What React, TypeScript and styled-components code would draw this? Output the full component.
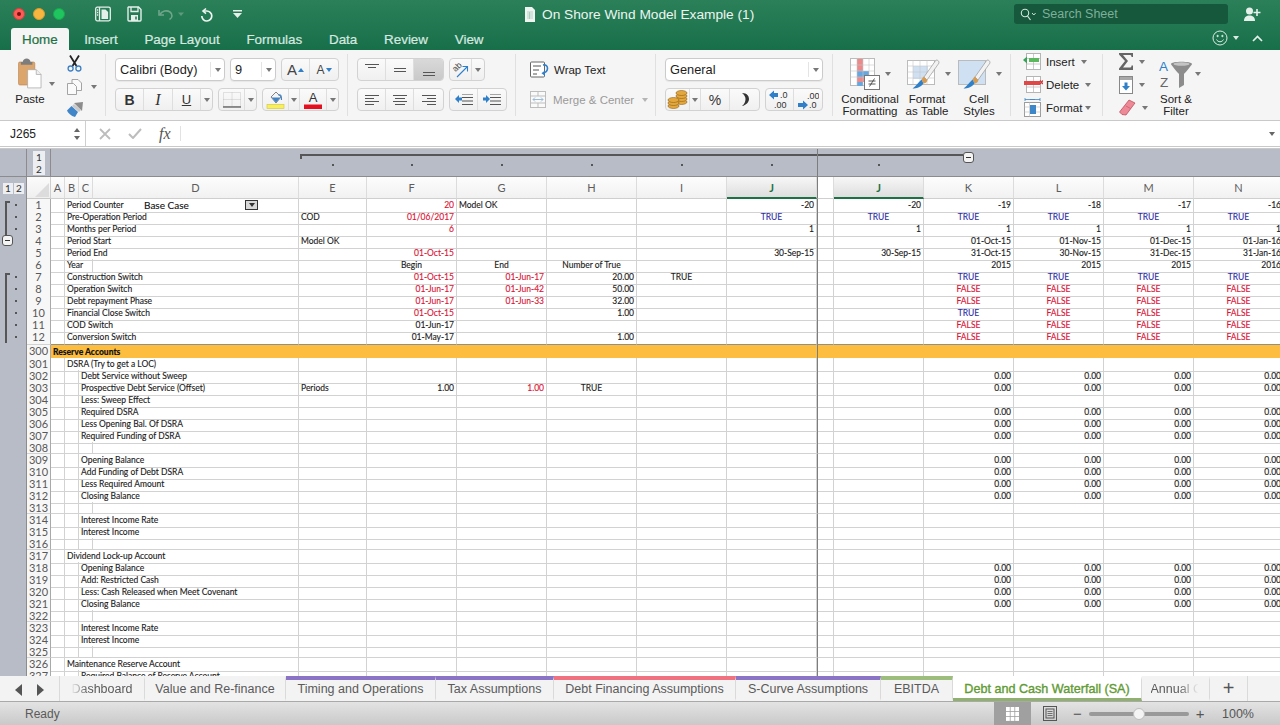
import React from "react";
import styled, { createGlobalStyle } from "styled-components";

const UI = `"Liberation Sans", Arial, sans-serif`;
const SHEET = `Lato, "Open Sans", sans-serif`;
const COLS =
  "14px 14px 14px 206px 68px 90px 90px 90px 90px 90px 17px 90px 90px 90px 90px 90px";
const SHEET_GRID = `27px 24px ${COLS}`;
const SHEET_WIDTH = 1284;
const GRID_LINE = "#d2d2d2";
const RULE = "#8f8f8f";
const BAND = "#b8bcc6";

const COLUMNS = ["A", "B", "C", "D", "E", "F", "G", "H", "I", "J", "X", "Y", "K", "L", "M", "N"] as const;
type Col = (typeof COLUMNS)[number];
type Val = { t: string; c?: "red" | "blue"; a?: "left" | "center" | "right" };
type RowData = {
  n: number;
  b?: string;
  c?: string;
  v?: Partial<Record<Col, Val>>;
  dot?: boolean;
  bracket?: "start" | "mid" | "end";
  minus?: boolean;
  shortLabel?: boolean;
  combo?: boolean;
  rule?: boolean;
};

const N = (t: string): Val => ({ t });
const R = (t: string): Val => ({ t, c: "red" });
const L = (t: string): Val => ({ t, a: "left" });
const C = (t: string): Val => ({ t, a: "center" });
const TRUE: Val = { t: "TRUE", c: "blue", a: "center" };
const FALSE: Val = { t: "FALSE", c: "red", a: "center" };
const zeros = { K: N("0.00"), L: N("0.00"), M: N("0.00"), N: N("0.00") };
const allFalse = { K: FALSE, L: FALSE, M: FALSE, N: FALSE };
const allTrue = { K: TRUE, L: TRUE, M: TRUE, N: TRUE };

const TOP_ROWS: RowData[] = [
  { n: 1, b: "Period Counter", dot: true, bracket: "start", combo: true, v: { F: R("20"), G: L("Model OK"), J: N("-20"), Y: N("-20"), K: N("-19"), L: N("-18"), M: N("-17"), N: N("-16") } },
  { n: 2, b: "Pre-Operation Period", dot: true, bracket: "mid", v: { E: L("COD"), F: R("01/06/2017"), J: TRUE, Y: TRUE, ...allTrue } },
  { n: 3, b: "Months per Period", dot: true, bracket: "end", v: { F: R("6"), J: N("1"), Y: N("1"), K: N("1"), L: N("1"), M: N("1"), N: N("1") } },
  { n: 4, b: "Period Start", minus: true, v: { E: L("Model OK"), K: N("01-Oct-15"), L: N("01-Nov-15"), M: N("01-Dec-15"), N: N("01-Jan-16") } },
  { n: 5, b: "Period End", v: { F: R("01-Oct-15"), J: N("30-Sep-15"), Y: N("30-Sep-15"), K: N("31-Oct-15"), L: N("30-Nov-15"), M: N("31-Dec-15"), N: N("31-Jan-16") } },
  { n: 6, b: "Year", shortLabel: true, v: { F: C("Begin"), G: C("End"), H: C("Number of True"), K: N("2015"), L: N("2015"), M: N("2015"), N: N("2016") } },
  { n: 7, b: "Construction Switch", dot: true, bracket: "start", v: { F: R("01-Oct-15"), G: R("01-Jun-17"), H: N("20.00"), I: C("TRUE"), ...allTrue } },
  { n: 8, b: "Operation Switch", dot: true, bracket: "mid", v: { F: R("01-Jun-17"), G: R("01-Jun-42"), H: N("50.00"), ...allFalse } },
  { n: 9, b: "Debt repayment Phase", dot: true, bracket: "mid", v: { F: R("01-Jun-17"), G: R("01-Jun-33"), H: N("32.00"), ...allFalse } },
  { n: 10, b: "Financial Close Switch", dot: true, bracket: "mid", v: { F: R("01-Oct-15"), H: N("1.00"), ...allFalse, K: TRUE } },
  { n: 11, b: "COD Switch", dot: true, bracket: "mid", v: { F: N("01-Jun-17"), ...allFalse } },
  { n: 12, b: "Conversion Switch", dot: true, bracket: "end", rule: true, v: { F: N("01-May-17"), H: N("1.00"), ...allFalse } },
];

const BODY_ROWS: RowData[] = [
  { n: 301, b: "DSRA (Try to get a LOC)" },
  { n: 302, c: "Debt Service without Sweep", v: zeros },
  { n: 303, c: "Prospective Debt Service (Offset)", v: { E: L("Periods"), F: N("1.00"), G: R("1.00"), H: C("TRUE"), ...zeros } },
  { n: 304, c: "Less: Sweep Effect" },
  { n: 305, c: "Required DSRA", v: zeros },
  { n: 306, c: "Less Opening Bal. Of DSRA", v: zeros },
  { n: 307, c: "Required Funding of DSRA", v: zeros },
  { n: 308 },
  { n: 309, c: "Opening Balance", v: zeros },
  { n: 310, c: "Add Funding of Debt DSRA", v: zeros },
  { n: 311, c: "Less Required Amount", v: zeros },
  { n: 312, c: "Closing Balance", v: zeros },
  { n: 313 },
  { n: 314, c: "Interest Income Rate" },
  { n: 315, c: "Interest Income" },
  { n: 316 },
  { n: 317, b: "Dividend Lock-up Account" },
  { n: 318, c: "Opening Balance", v: zeros },
  { n: 319, c: "Add: Restricted Cash", v: zeros },
  { n: 320, c: "Less: Cash Released when Meet Covenant", v: zeros },
  { n: 321, c: "Closing Balance", v: zeros },
  { n: 322 },
  { n: 323, c: "Interest Income Rate" },
  { n: 324, c: "Interest Income" },
  { n: 325 },
  { n: 326, b: "Maintenance Reserve Account" },
  { n: 327, c: "Required Balance of Reserve Account" },
];

const HEADER_LETTERS: { key: string; label: string; selected?: boolean }[] = [
  { key: "A", label: "A" }, { key: "B", label: "B" }, { key: "C", label: "C" }, { key: "D", label: "D" },
  { key: "E", label: "E" }, { key: "F", label: "F" }, { key: "G", label: "G" }, { key: "H", label: "H" },
  { key: "I", label: "I" }, { key: "J", label: "J", selected: true }, { key: "X", label: "" },
  { key: "Y", label: "J", selected: true }, { key: "K", label: "K" }, { key: "L", label: "L" },
  { key: "M", label: "M" }, { key: "N", label: "N" },
];

const SHEET_TABS: { name: string; width: number; bar?: string; active?: boolean; fade?: "left" | "right" }[] = [
  { name: "Dashboard", width: 85, fade: "left" },
  { name: "Value and Re-finance", width: 141 },
  { name: "Timing and Operations", width: 150, bar: "#8b73c6" },
  { name: "Tax Assumptions", width: 118, bar: "#8b73c6" },
  { name: "Debt Financing Assumptions", width: 182, bar: "#f0717f" },
  { name: "S-Curve Assumptions", width: 145, bar: "#8b73c6" },
  { name: "EBITDA", width: 72, bar: "#9dbd7c" },
  { name: "Debt and Cash Waterfall (SA)", width: 189, active: true },
  { name: "Annual Cash", width: 68, fade: "right" },
];

const GlobalStyle = createGlobalStyle`
  html, body { margin: 0; padding: 0; background: #fff; }
  #root { width: 100%; }
  * { box-sizing: border-box; }
`;

const Page = styled.div`
  width: 1280px;
  height: 725px;
  display: flex;
  flex-direction: column;
  overflow: hidden;
  font-family: ${UI};
  color: #222;
`;

/* title bar + tabs */
const Header = styled.header`
  height: 50px;
  flex: none;
  display: flex;
  flex-direction: column;
  background: linear-gradient(#2b8059, #176f49);
`;

const TitleRow = styled.div`
  height: 28px;
  display: flex;
  align-items: center;
  padding-left: 13px;
`;

const Lights = styled.div`
  display: flex;
  gap: 8px;
  width: 82px;
`;

const Light = styled.span<{ $color: string; $edge: string }>`
  width: 12px;
  height: 12px;
  border-radius: 50%;
  background: ${(p) => p.$color};
  border: 1px solid ${(p) => p.$edge};
  display: flex;
  align-items: center;
  justify-content: center;
`;

const LightDot = styled.span`
  width: 4px;
  height: 4px;
  border-radius: 50%;
  background: #7a0f10;
`;

const QuickTools = styled.div`
  width: 430px;
  display: flex;
  align-items: center;
`;

const QuickSlot = styled.span<{ $w: number }>`
  width: ${(p) => p.$w}px;
  display: flex;
  align-items: center;
`;

const DocTitle = styled.div`
  width: 489px;
  display: flex;
  align-items: center;
  gap: 7px;
  color: #eef5f1;
  font-size: 13.7px;
`;

const SearchBox = styled.div`
  width: 214px;
  height: 20px;
  border-radius: 3px;
  background: #15583c;
  display: flex;
  align-items: center;
  gap: 5px;
  padding-left: 6px;
  color: #7faf99;
  font-size: 12.5px;
`;

const TitleEnd = styled.div`
  margin-left: 16px;
  display: flex;
`;

const TabRow = styled.nav`
  height: 22px;
  display: flex;
  align-items: flex-end;
  padding-left: 11px;
`;

const MenuTab = styled.div<{ $active?: boolean }>`
  height: 22px;
  padding: 0 ${(p) => (p.$active ? 11 : 13.4)}px;
  margin-right: ${(p) => (p.$active ? 2 : 0)}px;
  display: flex;
  align-items: center;
  font-size: 13.4px;
  -webkit-text-stroke: 0.2px currentColor;
  color: ${(p) => (p.$active ? "#1e7145" : "#d8e9e0")};
  background: ${(p) => (p.$active ? "#f5f5f5" : "transparent")};
  border-radius: 3px 3px 0 0;
`;

const TabRowEnd = styled.div`
  margin-left: auto;
  padding: 0 17px 4px 0;
  display: flex;
  align-items: center;
  gap: 5px;
`;

/* ribbon */
const Ribbon = styled.section`
  height: 71px;
  flex: none;
  display: flex;
  background: #f5f5f5;
  border-bottom: 1px solid #c9c9c9;
`;

const Group = styled.div<{ $w: number; $pl: number; $pt?: number }>`
  width: ${(p) => p.$w}px;
  height: 70px;
  padding: ${(p) => p.$pt ?? 8}px 0 0 ${(p) => p.$pl}px;
  display: flex;
  position: relative;
  &::after {
    content: "";
    position: absolute;
    right: 0;
    top: 4px;
    bottom: 4px;
    width: 1px;
    background: #e0e0e0;
  }
`;

const LastGroup = styled(Group)`
  &::after {
    display: none;
  }
`;

const Stack = styled.div<{ $gap?: number }>`
  display: flex;
  flex-direction: column;
  gap: ${(p) => p.$gap ?? 7}px;
`;

const Line = styled.div`
  display: flex;
  align-items: center;
  gap: 5px;
  height: 23px;
`;

const Caret = styled.span<{ $color?: string; $up?: boolean; $ml?: number }>`
  display: inline-block;
  flex: none;
  width: 0;
  height: 0;
  margin-left: ${(p) => p.$ml ?? 0}px;
  border-left: 3px solid transparent;
  border-right: 3px solid transparent;
  ${(p) =>
    p.$up
      ? `border-bottom: 4px solid ${p.$color ?? "#777"};`
      : `border-top: 4px solid ${p.$color ?? "#777"};`}
`;

const Select = styled.div<{ $w: number }>`
  width: ${(p) => p.$w}px;
  height: 23px;
  background: #fff;
  border: 1px solid #cbcbcb;
  border-radius: 4px;
  box-shadow: 0 1px 1px rgba(0, 0, 0, 0.06);
  display: flex;
  align-items: center;
  padding-left: 4px;
  font-size: 12.8px;
  color: #1d1d1d;
`;

const SelectArrow = styled.span`
  margin-left: auto;
  width: 14px;
  height: 15px;
  border-left: 1px solid #e4e4e4;
  display: flex;
  align-items: center;
  justify-content: center;
`;

const Seg = styled.div`
  height: 23px;
  display: flex;
  border: 1px solid #d2d2d2;
  border-radius: 4px;
  background: linear-gradient(#fafafa, #f0f0f0);
  overflow: hidden;
`;

const SegBtn = styled.div<{ $w: number; $active?: boolean }>`
  width: ${(p) => p.$w}px;
  display: flex;
  align-items: center;
  justify-content: center;
  gap: 1px;
  border-right: 1px solid #dedede;
  background: ${(p) => (p.$active ? "linear-gradient(#d9d9d9, #c9c9c9)" : "transparent")};
  font-size: 14px;
  color: #333;
  &:last-child {
    border-right: none;
  }
`;

const BigA = styled.span<{ $size: number }>`
  font-size: ${(p) => p.$size}px;
  color: #444;
  line-height: 1;
`;

const Bold = styled.span`
  font-weight: 700;
  font-size: 14px;
  color: #333;
`;

const Italic = styled.span`
  font-style: italic;
  font-family: "Liberation Serif", serif;
  font-size: 16px;
  color: #333;
`;

const Under = styled.span`
  font-size: 13px;
  text-decoration: underline;
  color: #333;
`;

const PlainLink = styled.div<{ $muted?: boolean }>`
  height: 23px;
  display: flex;
  align-items: center;
  font-size: 11.5px;
  color: ${(p) => (p.$muted ? "#9a9a9a" : "#222")};
`;

const LinkLabel = styled.span<{ $left: number }>`
  margin-left: ${(p) => p.$left}px;
`;

const PasteBtn = styled.div`
  width: 32px;
  display: flex;
  flex-direction: column;
  align-items: center;
  font-size: 11.5px;
  gap: 3px;
`;

const PasteTop = styled.div`
  height: 32px;
  display: flex;
  align-items: flex-start;
`;

const PasteCaret = styled.div`
  width: 21px;
  padding: 14px 0 0 3px;
`;

const ClipTools = styled.div`
  display: flex;
  flex-direction: column;
  gap: 6px;
  margin-top: -3px;
`;

const ClipLine = styled.div`
  height: 17px;
  display: flex;
  align-items: center;
  gap: 6px;
`;

const StyleBtn = styled.div<{ $w: number }>`
  width: ${(p) => p.$w}px;
  display: flex;
  flex-direction: column;
  align-items: center;
  font-size: 11.5px;
  line-height: 12px;
  text-align: center;
  color: #222;
`;

const SortBtn = styled(StyleBtn)`
  margin-top: 7px;
`;

const SortCaret = styled(Caret)`
  margin: 0 -8px 0 -3px;
`;

const StyleIcon = styled.div<{ $pl?: number }>`
  height: 36px;
  display: flex;
  align-items: center;
  gap: 5px;
  margin: -1px 0 1px;
  padding-left: ${(p) => p.$pl ?? 0}px;
`;

const EditLine = styled.div`
  height: 23px;
  display: flex;
  align-items: center;
  gap: 6px;
  width: 38px;
`;

const CellLine = styled.div`
  height: 23px;
  display: flex;
  align-items: center;
  gap: 3px;
  font-size: 11.5px;
  color: #222;
`;

/* formula bar */
const FormulaBar = styled.div`
  height: 26px;
  flex: none;
  display: flex;
  align-items: center;
  background: #fff;
  border-bottom: 1px solid #c9c9c9;
`;

const NameBox = styled.div`
  width: 86px;
  height: 100%;
  padding: 0 5px 0 10px;
  display: flex;
  align-items: center;
  justify-content: space-between;
  border-right: 1px solid #cfcfcf;
  font-size: 12px;
`;

const Steppers = styled.span`
  display: flex;
  flex-direction: column;
  gap: 4px;
`;

const FormulaTools = styled.div`
  width: 95px;
  height: 15px;
  padding-left: 13px;
  display: flex;
  align-items: center;
  gap: 17px;
  border-right: 1px solid #e2e2e2;
`;

const Fx = styled.span`
  font-family: "Liberation Serif", serif;
  font-style: italic;
  font-size: 16px;
  color: #555;
`;

const FormulaInput = styled.div`
  flex: 1;
  display: flex;
  justify-content: flex-end;
  padding-right: 5px;
`;

/* sheet */
const Sheet = styled.main`
  flex: 1;
  min-height: 0;
  overflow: hidden;
  margin-top: 1px;
  border-top: 1px solid #c9c9c9;
`;

const OutlineBand = styled.div`
  height: 28px;
  width: ${SHEET_WIDTH}px;
  display: grid;
  grid-template-columns: ${SHEET_GRID};
  grid-template-rows: 28px;
  background: ${BAND};
  border-bottom: 1px solid #8c8c8c;
`;

const BandGutter = styled.div`
  grid-column: 1;
  grid-row: 1;
  border-right: 1px solid #8c8c8c;
`;

const LevelStack = styled.div`
  grid-column: 2;
  grid-row: 1;
  border-right: 1px solid #8c8c8c;
  padding: 2px 0 0 6px;
  display: flex;
  flex-direction: column;
`;

const LevelKey = styled.span`
  width: 12px;
  height: 12px;
  background: #eceef1;
  color: #333;
  font: 10px/12px ${SHEET};
  text-align: center;
`;

const BracketBar = styled.div`
  grid-column: 7 / 16;
  grid-row: 1;
  margin: 5px 51px 0 1px;
  height: 5px;
  border-top: 2px solid #565656;
  border-left: 2px solid #565656;
`;

const BandDot = styled.span<{ $col: number }>`
  grid-column: ${(p) => p.$col};
  grid-row: 1;
  justify-self: center;
  margin-top: 15px;
  width: 2px;
  height: 2px;
  background: #555;
`;

const BandFreeze = styled.div`
  grid-column: 13;
  grid-row: 1;
  border-left: 1px solid #7d7d7d;
`;

const OutlineMinus = styled.span`
  width: 11px;
  height: 11px;
  border: 1px solid #555;
  border-radius: 3px;
  background: #f4f4f4;
  display: flex;
  align-items: center;
  justify-content: center;
  &::before {
    content: "";
    width: 5px;
    height: 1px;
    background: #333;
  }
`;

const BandMinus = styled(OutlineMinus)`
  grid-column: 15;
  grid-row: 1;
  justify-self: center;
  margin: 3px 2px 0 0;
`;

const HeaderRow = styled.div`
  height: 22px;
  width: ${SHEET_WIDTH}px;
  display: grid;
  grid-template-columns: ${SHEET_GRID};
`;

const HeaderGutter = styled.div`
  background: ${BAND};
  border-right: 1px solid #8c8c8c;
  padding: 6px 0 0 3px;
  display: flex;
  gap: 1px;
`;

const HeaderLevel = styled.span`
  width: 10px;
  height: 11px;
  background: #eceef1;
  color: #333;
  font: 10px/11px ${SHEET};
  text-align: center;
`;

const Corner = styled.div`
  background: linear-gradient(#fbfbfb, #efefef);
  border-right: 1px solid #cfcfcf;
  border-bottom: 1px solid #c8c8c8;
  display: flex;
  align-items: flex-end;
  justify-content: flex-end;
  padding: 0 1px 1px 0;
`;

const ColHead = styled.div<{ $selected?: boolean; $freeze?: boolean }>`
  display: flex;
  align-items: center;
  justify-content: center;
  font: ${(p) => (p.$selected ? 700 : 400)} 11px ${SHEET};
  color: ${(p) => (p.$selected ? "#1e7145" : "#5c5c5c")};
  background: ${(p) =>
    p.$freeze
      ? "#fff"
      : p.$selected
      ? "linear-gradient(#f7f7f7, #dedede)"
      : "linear-gradient(#fdfdfd, #f1f1f1)"};
  border-right: 1px solid #dcdcdc;
  border-left: ${(p) => (p.$freeze ? "1px solid #7d7d7d" : "none")};
  border-bottom: ${(p) => (p.$selected ? "2px solid #1e7145" : "1px solid #cfcfcf")};
`;

const SheetRow = styled.div<{ $h?: number; $fill?: string }>`
  height: ${(p) => p.$h ?? 12}px;
  width: ${SHEET_WIDTH}px;
  display: grid;
  grid-template-columns: ${SHEET_GRID};
  background: ${(p) => p.$fill ?? "#fff"};
  font: 8.5px/13px ${SHEET};
  -webkit-text-stroke: 0.12px currentColor;
  color: #1a1a1a;
`;

const Gutter = styled.div`
  background: ${BAND};
  border-right: 1px solid #8c8c8c;
  position: relative;
`;

const Bracket = styled.span<{ $kind: "start" | "mid" | "end" }>`
  position: absolute;
  left: 5px;
  width: 2px;
  top: ${(p) => (p.$kind === "start" ? 2 : 0)}px;
  bottom: ${(p) => (p.$kind === "end" ? 2 : 0)}px;
  background: #565656;
  &::after {
    content: "";
    display: ${(p) => (p.$kind === "start" ? "block" : "none")};
    width: 5px;
    height: 1.5px;
    background: #565656;
  }
`;

const GutterDot = styled.span`
  position: absolute;
  left: 15px;
  top: 5px;
  width: 2px;
  height: 2px;
  background: #555;
`;

const GutterMinus = styled(OutlineMinus)`
  position: absolute;
  left: 2px;
  top: 0;
`;

const RowHead = styled.div<{ $rule?: boolean }>`
  background: #f7f7f7;
  border-right: 1px solid #a9a9a9;
  border-bottom: 1px solid ${(p) => (p.$rule ? RULE : GRID_LINE)};
  font: 11px/11px ${SHEET};
  -webkit-text-stroke: 0;
  text-align: center;
  color: #585858;
`;

const Cell = styled.div<{ $align?: string; $tone?: string; $span?: number; $rule?: boolean; $freeze?: boolean }>`
  grid-column: span ${(p) => p.$span ?? 1};
  position: relative;
  white-space: nowrap;
  overflow: ${(p) => (p.$span ? "visible" : "hidden")};
  padding: 0 2px;
  text-align: ${(p) => p.$align ?? "right"};
  color: ${(p) => (p.$tone === "red" ? "#dc1233" : p.$tone === "blue" ? "#2c2ca8" : "#1a1a1a")};
  border-right: 1px solid ${GRID_LINE};
  border-bottom: 1px solid ${(p) => (p.$rule ? RULE : GRID_LINE)};
  border-left: ${(p) => (p.$freeze ? "1px solid #7d7d7d" : "none")};
`;

const ComboText = styled.span`
  position: absolute;
  left: 79px;
  top: 0;
  font-size: 10px;
  color: #111;
`;

const ComboButton = styled.span`
  position: absolute;
  left: 180px;
  top: 1px;
  width: 13px;
  height: 10px;
  background: #d8d8d8;
  border: 1px solid #333;
  display: flex;
  align-items: center;
  justify-content: center;
`;

const SpacerCell = styled.div<{ $freeze?: boolean }>`
  border-right: 1px solid ${GRID_LINE};
  border-left: ${(p) => (p.$freeze ? "1px solid #7d7d7d" : "none")};
`;

const BannerHead = styled(RowHead)`
  border-bottom: none;
`;

const BannerText = styled.div`
  grid-column: span 10;
  padding-left: 2px;
  font-weight: 900;
  color: #111;
  line-height: 14px;
`;

const BannerFreeze = styled.div`
  border-left: 1px solid #7d7d7d;
`;

/* tabs and status */
const TabStrip = styled.div`
  height: 26px;
  flex: none;
  display: flex;
  background: #f3f3f3;
  border-bottom: 1px solid #a9a9a9;
`;

const TabNav = styled.div`
  width: 60px;
  padding: 3px 0 0 15px;
  display: flex;
  align-items: center;
  gap: 15px;
  border-right: 1px solid #dadada;
`;

const SheetTab = styled.div<{ $w: number; $bar?: string; $active?: boolean }>`
  width: ${(p) => p.$w}px;
  flex: none;
  display: flex;
  align-items: center;
  justify-content: center;
  font-size: ${(p) => (p.$active ? 12.6 : 12.5)}px;
  -webkit-text-stroke: ${(p) => (p.$active ? "0.35px currentColor" : "0")};
  white-space: nowrap;
  overflow: hidden;
  color: ${(p) => (p.$active ? "#5f9a33" : "#5a5a5a")};
  background: ${(p) => (p.$active ? "#fff" : "transparent")};
  border-right: 1px solid #dadada;
  border-top: 4px solid ${(p) => p.$bar ?? "transparent"};
  border-bottom: 3px solid ${(p) => (p.$active ? "#8fb06f" : "transparent")};
`;

const FadedName = styled.span`
  mask-image: linear-gradient(to right, transparent 0, #000 28%);
`;

const ClippedName = styled.span`
  width: 50px;
  overflow: hidden;
  mask-image: linear-gradient(to right, #000 55%, transparent 95%);
`;

const AddSheet = styled.div`
  width: 38px;
  display: flex;
  align-items: center;
  justify-content: center;
  font-size: 20px;
  color: #555;
  border-right: 1px solid #dadada;
`;

const StatusBar = styled.footer`
  height: 23px;
  flex: none;
  display: flex;
  align-items: center;
  padding-left: 25px;
  background: linear-gradient(#e3e3e3, #c9c9c9);
  font-size: 12px;
  color: #5a5a5a;
`;

const StatusRight = styled.div`
  margin-left: auto;
  height: 100%;
  display: flex;
  align-items: center;
`;

const ViewBtn = styled.div<{ $active?: boolean }>`
  width: 37px;
  height: 100%;
  display: flex;
  align-items: center;
  justify-content: center;
  background: ${(p) => (p.$active ? "#a0a0a0" : "transparent")};
`;

const Zoomer = styled.div`
  width: 149px;
  margin-left: 5px;
  display: flex;
  align-items: center;
  gap: 7px;
  font-size: 15px;
  color: #555;
`;

const SliderTrack = styled.div`
  width: 100px;
  height: 4px;
  border-radius: 2px;
  background: #999;
  display: flex;
  align-items: center;
  justify-content: center;
`;

const SliderThumb = styled.span`
  width: 12px;
  height: 12px;
  border-radius: 50%;
  background: #f4f4f4;
  border: 1px solid #bcbcbc;
`;

const ZoomValue = styled.span`
  width: 58px;
  font-size: 12.5px;
  color: #555;
`;

/* icons */
const SidebarIcon = () => (
  <svg width="16" height="16" viewBox="0 0 16 16" fill="none" stroke="#e6f0eb" strokeWidth="1.3">
    <rect x="0.7" y="1.2" width="14.6" height="13.6" rx="1.5" />
    <path d="M4.5 1.2v13.6" />
    <path d="M2 4h1.2M2 6.5h1.2M2 9h1.2" />
    <path d="M6.5 13V3.5h4l2.6 2.6V13z" fill="#e6f0eb" stroke="none" />
  </svg>
);

const SaveIcon = () => (
  <svg width="15" height="16" viewBox="0 0 15 16" fill="none">
    <path d="M1.5 1h10L14 3.5V14a1 1 0 0 1-1 1H2a1 1 0 0 1-1-1V1.5z" stroke="#e6f0eb" strokeWidth="1.4" />
    <path d="M4 1v4.5h7V1" stroke="#e6f0eb" strokeWidth="1.3" />
    <rect x="4" y="9" width="7" height="6" fill="#e6f0eb" />
    <rect x="8.2" y="10.5" width="1.6" height="3" fill="#2a7d57" />
  </svg>
);

const UndoIcon = () => (
  <svg width="28" height="14" viewBox="0 0 28 14" fill="none">
    <path d="M2 3v5h5" stroke="#6fa58c" strokeWidth="1.6" />
    <path d="M2.5 8C5 3.5 10 3 13 5c3 2.2 2.5 6-.5 7.5" stroke="#6fa58c" strokeWidth="1.6" />
    <path d="M21 5.5h6l-3 3.5z" fill="#5f9a80" />
  </svg>
);

const RedoIcon = () => (
  <svg width="13" height="15" viewBox="0 0 13 15" fill="none">
    <path d="M6 1.5l-3 2.6L6 6.6" stroke="#eef5f1" strokeWidth="1.6" />
    <path d="M3.5 4h3A5 5 0 1 1 1.8 9" stroke="#eef5f1" strokeWidth="1.7" />
  </svg>
);

const CustomizeIcon = () => (
  <svg width="9" height="8" viewBox="0 0 9 8">
    <rect x="0" y="0" width="9" height="1.5" fill="#e6f0eb" />
    <path d="M0 3h9L4.5 8z" fill="#e6f0eb" />
  </svg>
);

const DocIcon = () => (
  <svg width="10" height="15" viewBox="0 0 10 15">
    <path d="M0 0h7l3 3v12H0z" fill="#eef5f1" />
    <path d="M2 5h6M2 7h6M2 9h6M2 11h6M4.5 5v7" stroke="#9cc3b0" strokeWidth="0.7" />
  </svg>
);

const SearchIcon = () => (
  <svg width="17" height="13" viewBox="0 0 17 13" fill="none">
    <circle cx="5" cy="5" r="3.7" stroke="#d5e5dd" strokeWidth="1.1" />
    <path d="M7.5 8l3 4" stroke="#d5e5dd" strokeWidth="1.2" />
    <path d="M12 5l1.8 2 1.8-2" stroke="#d5e5dd" strokeWidth="1" />
  </svg>
);

const PersonIcon = () => (
  <svg width="17" height="14" viewBox="0 0 17 14">
    <circle cx="5.5" cy="4" r="3.5" fill="#e6f0eb" />
    <path d="M0 14c0-4 2.5-5.500 5.500-5.500S11 10 11 14z" fill="#e6f0eb" />
    <path d="M13 2v7M9.500 5.500h7" stroke="#e6f0eb" strokeWidth="1.6" />
  </svg>
);

const SmileyIcon = () => (
  <svg width="16" height="16" viewBox="0 0 16 16" fill="none" stroke="#dcebe3" strokeWidth="1">
    <circle cx="8" cy="8" r="7" />
    <circle cx="5.6" cy="6" r="0.7" fill="#dcebe3" />
    <circle cx="10.4" cy="6" r="0.7" fill="#dcebe3" />
    <path d="M4.500 9.500c1.500 3 5.500 3 7 0" />
  </svg>
);

const ChevronUpIcon = () => (
  <svg width="11" height="7" viewBox="0 0 11 7" fill="none">
    <path d="M1 6l4.500-4.500L10 6" stroke="#e6f0eb" strokeWidth="1.7" />
  </svg>
);

const PasteIcon = () => (
  <svg width="24" height="31" viewBox="0 0 25 32">
    <rect x="0.5" y="4" width="17" height="24" rx="1.5" fill="#dca56c" stroke="#b57e47" strokeWidth="0.6" />
    <path d="M5 4c0-2 2-3.500 4-3.500S13 2 13 4h2v3H3V4z" fill="#7d7d7d" />
    <path d="M10 12h9l5 5v14H10z" fill="#fff" stroke="#a9a9a9" strokeWidth="0.8" />
    <path d="M19 12v5h5" fill="#f0f0f0" stroke="#a9a9a9" strokeWidth="0.8" />
  </svg>
);

const CutIcon = () => (
  <svg width="15" height="17" viewBox="0 0 15 17" fill="none">
    <path d="M3 0.5l6.500 10.500M12 0.5L5.500 11" stroke="#222" strokeWidth="1.8" />
    <circle cx="3.6" cy="13.5" r="2.5" stroke="#3b7fc4" strokeWidth="1.3" />
    <circle cx="11.4" cy="13.5" r="2.5" stroke="#3b7fc4" strokeWidth="1.3" />
  </svg>
);

const CopyIcon = () => (
  <svg width="15" height="16" viewBox="0 0 15 16" fill="#fafafa" stroke="#9a9a9a" strokeWidth="0.9">
    <path d="M5 .5h6l3.500 3.500v7.500H5z" />
    <path d="M.5 4.500h6l3 3v8h-9z" />
  </svg>
);

const BrushIcon = () => (
  <svg width="17" height="15" viewBox="0 0 17 15">
    <path d="M7 1l9-1-1 9z" fill="#8c8c8c" />
    <path d="M7 2l7 6-2 2-7-6z" fill="#c9c9c9" />
    <path d="M4.500 4L11 10l-3 5C4 14 1 11 0 8.500z" fill="#3f85c8" />
  </svg>
);

const BordersIcon = () => (
  <svg width="18" height="16" viewBox="0 0 18 16" fill="none">
    <path d="M.5.5h17v14H.5zM9 .5v14M.5 7.500h17" stroke="#b5b5b5" strokeWidth="0.7" strokeDasharray="1 1" />
    <path d="M0 15h18" stroke="#333" strokeWidth="1.2" />
  </svg>
);

const FillIcon = () => (
  <svg width="19" height="18" viewBox="0 0 19 18">
    <path d="M5 6l5-5 5 5-5 6z" fill="#f6f6f6" stroke="#666" strokeWidth="0.8" />
    <path d="M5.500 6.500h9L10 11.500z" fill="#4384c6" />
    <path d="M12 4c3-1 3.500 1 3.500 5" fill="none" stroke="#4384c6" strokeWidth="1.2" />
    <rect x="1" y="13.5" width="17" height="4" fill="#f8ef5a" stroke="#cfc53a" strokeWidth="0.6" />
  </svg>
);

const FontColorIcon = () => (
  <svg width="18" height="18" viewBox="0 0 18 18">
    <text x="9" y="11" textAnchor="middle" fontFamily="Liberation Sans" fontSize="13" fill="#333">A</text>
    <rect x="0" y="13.5" width="18" height="4.5" fill="#e60f1f" />
  </svg>
);

const LinesIcon = ({ rows }: { rows: [number, number, number][] }) => (
  <svg width="16" height="12" viewBox="0 0 16 12" stroke="#555" strokeWidth="1">
    {rows.map(([x1, x2, y]) => (
      <path key={y} d={`M${x1} ${y + 0.5}H${x2}`} />
    ))}
  </svg>
);

const IndentIcon = ({ flip }: { flip?: boolean }) => (
  <svg width="18" height="11" viewBox="0 0 18 11">
    <path d="M7 0h11M7 3.500h11M7 7h11M7 10.500h11" stroke="#555" strokeWidth="1" />
    <path d={flip ? "M0 3.500h3V1l4 4-4 4V6.500H0z" : "M7 3.500H4V1L0 5l4 4V6.500h3z"} fill="#2f7fc9" />
  </svg>
);

const OrientIcon = () => (
  <svg width="17" height="17" viewBox="0 0 17 17" fill="none" overflow="visible">
    <text x="1" y="9" fontFamily="Liberation Sans" fontSize="8.5" fill="#444" transform="rotate(-45 5 7)">ab</text>
    <path d="M5 16L15 6M10.500 5.500h5v5" stroke="#2f7fc9" strokeWidth="1.1" />
  </svg>
);

const WrapIcon = () => (
  <svg width="20" height="17" viewBox="0 0 20 17" fill="none">
    <rect x="0.5" y="1" width="14" height="15" rx="1" fill="#fff" stroke="#666" />
    <path d="M3 5h8M3 9h6M3 13h4" stroke="#555" />
    <path d="M13 4c6-1 6 7 0 8" stroke="#2f7fc9" strokeWidth="1.6" />
    <path d="M15 9.500l-3.500 2.700 3.500 2.800z" fill="#2f7fc9" />
  </svg>
);

const MergeIcon = () => (
  <svg width="16" height="17" viewBox="0 0 16 17" fill="none" stroke="#bdbdbd">
    <rect x="0.5" y="0.5" width="15" height="16" fill="#fafafa" />
    <path d="M.5 5h15M.5 12h15M8 .5V5M8 12v4.500" />
    <path d="M3 8.500h10M5 6.500l-2 2 2 2M11 6.500l2 2-2 2" stroke="#9dbcd8" />
  </svg>
);

const CoinsIcon = () => (
  <svg width="21" height="19" viewBox="0 0 21 19" stroke="#8f5f17" strokeWidth="0.6">
    <g fill="#e3a73e">
      <ellipse cx="14.5" cy="12" rx="5.5" ry="2.5" />
      <ellipse cx="14.5" cy="9" rx="5.5" ry="2.5" />
      <ellipse cx="14.5" cy="6" rx="5.5" ry="2.5" />
      <ellipse cx="14.5" cy="3" rx="5.5" ry="2.5" />
      <ellipse cx="6.5" cy="16" rx="5.5" ry="2.5" />
      <ellipse cx="6.5" cy="13" rx="5.5" ry="2.5" />
      <ellipse cx="6.5" cy="10" rx="5.5" ry="2.5" />
    </g>
  </svg>
);

const CommaIcon = () => (
  <svg width="8" height="13" viewBox="0 0 8 13">
    <path d="M1 0c5 0 7 3 7 6s-3 6.500-7 7c2.500-2 3.500-4.500 3.500-7S3 1.500 1 0z" fill="#333" />
  </svg>
);

const DecimalIcon = ({ more }: { more?: boolean }) => (
  <svg width="22" height="20" viewBox="0 0 22 20">
    <path d={more ? "M0 5l5-4.500V3h4v4H5v2.500z" : "M11 15l-5-4.500V13H1v4h5v2.500z"} fill="#2f7fc9" />
    <text x={more ? 11 : 10} y={more ? 8 : 9} fontFamily="Liberation Sans" fontSize="9" fill="#333">{more ? ".0" : ".00"}</text>
    <text x={more ? 5 : 12} y={18} fontFamily="Liberation Sans" fontSize="9" fill="#333">{more ? ".00" : ".0"}</text>
  </svg>
);

const CondIcon = () => (
  <svg width="30" height="32" viewBox="0 0 30 32">
    <rect x="0.5" y="0.5" width="24" height="27" fill="#fff" stroke="#bbb" />
    <rect x="7" y="1" width="6" height="6" fill="#ea8a8a" />
    <rect x="7" y="7" width="6" height="6" fill="#ea8a8a" />
    <rect x="7" y="13" width="12" height="6" fill="#67a7e0" />
    <rect x="7" y="19" width="12" height="5" fill="#ea8a8a" />
    <rect x="7" y="24" width="6" height="4" fill="#67a7e0" />
    <path d="M.5 7h24M.5 13h24M.5 19h24M7 .5v27M13 .5v27M19 .5v27" stroke="#c8c8c8" strokeWidth="0.6" />
    <rect x="14.5" y="17.5" width="15" height="14" fill="#fff" stroke="#777" />
    <path d="M18.500 23h7M18.500 26h7M24.500 20.500l-5 8" stroke="#444" strokeWidth="0.9" />
  </svg>
);

const BrushGrid = ({ tinted }: { tinted?: boolean }) => (
  <svg width="33" height="32" viewBox="0 0 33 32">
    <rect x="0.5" y="2.5" width="27" height="24" fill="#fff" stroke="#bbb" />
    <rect x={tinted ? 1 : 6} y={tinted ? 3 : 8} width={tinted ? 26 : 15} height={tinted ? 23 : 13} fill="#cfe0f3" />
    {!tinted && <path d="M.5 8h27M.5 14h27M.5 20h27M6 2.500v24M13 2.500v24M20 2.500v24" stroke="#c8c8c8" strokeWidth="0.6" />}
    <path d="M29 2L17 19l3 3L32 5c0-2-1-3-3-3z" fill="#f2f2f2" stroke="#888" strokeWidth="0.6" />
    <path d="M16.500 18.500l4 4c-1 2-2 3-4 3l-2-4z" fill="#d89a4e" />
    <path d="M14.500 21.500l2 4c-3 4-7 5-11 5 3-2 5-5 9-9z" fill="#2f7fc9" />
  </svg>
);

const GridMini = ({ children }: { children?: React.ReactNode }) => (
  <svg width="20" height="17" viewBox="0 0 20 17" fill="none">
    <rect x="3.5" y="0.5" width="14" height="16" fill="#fff" stroke="#b5b5b5" />
    <path d="M3.500 5.500h14M3.500 11h14M10.500.5v16" stroke="#b5b5b5" strokeWidth="0.7" />
    {children}
  </svg>
);

const FormatCellIcon = () => (
  <svg width="20" height="19" viewBox="0 0 20 19" fill="none">
    <path d="M2 1.500h15M2 0v3M17 0v3M7 1.500h5" stroke="#3d86c8" strokeWidth="0.8" />
    <rect x="1.5" y="4.500" width="16" height="14" fill="#fff" stroke="#9c9c9c" />
    <path d="M1.500 9h16M1.500 14h16M6.500 4.500v14" stroke="#c4c4c4" strokeWidth="0.7" />
    <rect x="7" y="7" width="6" height="9" fill="#3d86c8" />
  </svg>
);

const SigmaIcon = () => (
  <svg width="14" height="17" viewBox="0 0 14 17">
    <path d="M0 0h14v4h-1.500c0-1.500-.5-2-2-2H4l5 6-5 6.500h6.500c1.500 0 2-.5 2-2H14V17H0v-1.500L6 8 0 1.500z" fill="#666" />
  </svg>
);

const FillDownIcon = () => (
  <svg width="14" height="18" viewBox="0 0 14 18" fill="none">
    <rect x="0.5" y="0.5" width="13" height="17" fill="#fff" stroke="#888" />
    <rect x="1" y="1" width="12" height="3" fill="#a9a9a9" />
    <path d="M5.500 6.500h3V10H11l-4 4.500L3 10h2.500z" fill="#2f7fc9" />
  </svg>
);

const EraserIcon = () => (
  <svg width="17" height="17" viewBox="0 0 17 17">
    <path d="M10 1l6 3L7 16l-4-.5L.5 13z" fill="#ee8a97" stroke="#b7404f" strokeWidth="0.7" />
    <path d="M7 7l4.500 2.500" stroke="#b7404f" strokeWidth="0.5" />
  </svg>
);

const SortIcon = () => (
  <svg width="34" height="30" viewBox="0 0 34 30" overflow="visible">
    <text x="0" y="12" fontFamily="Liberation Sans" fontSize="13.5" fill="#2f7fc9">A</text>
    <text x="1" y="28" fontFamily="Liberation Sans" fontSize="13.5" fill="#666">Z</text>
    <path d="M12 5c0-3 21-3 21 0 0 1-7 9-8 10v11l-5 3V15c-1-1-8-9-8-10z" fill="#8c8c8c" />
    <ellipse cx="22.5" cy="5" rx="8" ry="1.7" fill="#c4c4c4" />
  </svg>
);

const CrossIcon = () => (
  <svg width="12" height="12" viewBox="0 0 12 12">
    <path d="M1 1l10 10M11 1L1 11" stroke="#bdbdbd" strokeWidth="1.8" />
  </svg>
);

const CheckIcon = () => (
  <svg width="14" height="11" viewBox="0 0 14 11" fill="none">
    <path d="M1 6l4 4 8-9" stroke="#bdbdbd" strokeWidth="2" />
  </svg>
);

const NormalViewIcon = () => (
  <svg width="13" height="14" viewBox="0 0 13 14" fill="#fff">
    {[0, 4.6, 9.2].flatMap((x) =>
      [0, 4.9, 9.8].map((y) => <rect key={`${x}-${y}`} x={x} y={y} width="3.8" height="4.1" />)
    )}
  </svg>
);

const PageViewIcon = () => (
  <svg width="14" height="15" viewBox="0 0 14 15" fill="none" stroke="#555">
    <rect x="0.5" y="0.5" width="13" height="14" />
    <rect x="3" y="3" width="8" height="9" />
    <path d="M4.500 5.500h5M4.500 7.500h5M4.500 9.500h5" strokeWidth="0.8" />
  </svg>
);

const NavArrow = ({ right }: { right?: boolean }) => (
  <svg width="7" height="12" viewBox="0 0 7 12">
    <path d={right ? "M0 0l7 6-7 6z" : "M7 0L0 6l7 6z"} fill="#555" />
  </svg>
);

const renderCells = (row: RowData) => {
  const out: React.ReactNode[] = [];
  let i = 0;
  while (i < COLUMNS.length) {
    const col = COLUMNS[i];
    const freeze = col === "X";
    if (row.b && col === "B") {
      const span = row.shortLabel ? 2 : 3;
      out.push(
        <Cell key={col} $align="left" $span={span} $rule={row.rule}>
          {row.b}
          {row.combo && (
            <>
              <ComboText>Base Case</ComboText>
              <ComboButton>
                <Caret $color="#333" />
              </ComboButton>
            </>
          )}
        </Cell>
      );
      i += span;
      continue;
    }
    if (row.c && col === "C") {
      out.push(
        <Cell key={col} $align="left" $span={2} $rule={row.rule}>
          {row.c}
        </Cell>
      );
      i += 2;
      continue;
    }
    const val = row.v?.[col];
    out.push(
      <Cell key={col} $align={val?.a} $tone={val?.c} $rule={row.rule} $freeze={freeze}>
        {val?.t}
      </Cell>
    );
    i += 1;
  }
  return out;
};

const DataRow = ({ row }: { row: RowData }) => (
  <SheetRow>
    <Gutter>
      {row.bracket && <Bracket $kind={row.bracket} />}
      {row.dot && <GutterDot />}
      {row.minus && <GutterMinus />}
    </Gutter>
    <RowHead $rule={row.rule}>{row.n}</RowHead>
    {renderCells(row)}
  </SheetRow>
);

const App = () => (
  <Page>
    <GlobalStyle />
    <Header>
      <TitleRow>
        <Lights>
          <Light $color="#fc5b57" $edge="#d8403c">
            <LightDot />
          </Light>
          <Light $color="#f7b63f" $edge="#dc9c2c" />
          <Light $color="#1fc65f" $edge="#18a84f" />
        </Lights>
        <QuickTools>
          <QuickSlot $w={32}><SidebarIcon /></QuickSlot>
          <QuickSlot $w={30}><SaveIcon /></QuickSlot>
          <QuickSlot $w={43}><UndoIcon /></QuickSlot>
          <QuickSlot $w={33}><RedoIcon /></QuickSlot>
          <QuickSlot $w={20}><CustomizeIcon /></QuickSlot>
        </QuickTools>
        <DocTitle>
          <DocIcon />
          On Shore Wind Model Example (1)
        </DocTitle>
        <SearchBox>
          <SearchIcon />
          Search Sheet
        </SearchBox>
        <TitleEnd>
          <PersonIcon />
        </TitleEnd>
      </TitleRow>
      <TabRow>
        <MenuTab $active>Home</MenuTab>
        <MenuTab>Insert</MenuTab>
        <MenuTab>Page Layout</MenuTab>
        <MenuTab>Formulas</MenuTab>
        <MenuTab>Data</MenuTab>
        <MenuTab>Review</MenuTab>
        <MenuTab>View</MenuTab>
        <TabRowEnd>
          <SmileyIcon />
          <Caret $color="#dcebe3" />
          <QuickSlot $w={3} />
          <ChevronUpIcon />
        </TabRowEnd>
      </TabRow>
    </Header>

    <Ribbon>
      <Group $w={106} $pl={14}>
        <PasteBtn>
          <PasteTop><PasteIcon /></PasteTop>
          Paste
        </PasteBtn>
        <PasteCaret><Caret /></PasteCaret>
        <ClipTools>
          <ClipLine><CutIcon /></ClipLine>
          <ClipLine><CopyIcon /><Caret $ml={3} /></ClipLine>
          <ClipLine><BrushIcon /></ClipLine>
        </ClipTools>
      </Group>

      <Group $w={242} $pl={9}>
        <Stack>
          <Line>
            <Select $w={110}>Calibri (Body)<SelectArrow><Caret /></SelectArrow></Select>
            <Select $w={46}>9<SelectArrow><Caret /></SelectArrow></Select>
            <Seg>
              <SegBtn $w={28}><BigA $size={15}>A</BigA><Caret $up $color="#2f7fc9" /></SegBtn>
              <SegBtn $w={28}><BigA $size={12}>A</BigA><Caret $color="#2f7fc9" /></SegBtn>
            </Seg>
          </Line>
          <Line>
            <Seg>
              <SegBtn $w={28}><Bold>B</Bold></SegBtn>
              <SegBtn $w={29}><Italic>I</Italic></SegBtn>
              <SegBtn $w={28}><Under>U</Under></SegBtn>
              <SegBtn $w={11}><Caret /></SegBtn>
            </Seg>
            <Seg>
              <SegBtn $w={26}><BordersIcon /></SegBtn>
              <SegBtn $w={11}><Caret /></SegBtn>
            </Seg>
            <Seg>
              <SegBtn $w={26}><FillIcon /></SegBtn>
              <SegBtn $w={11}><Caret /></SegBtn>
              <SegBtn $w={27}><FontColorIcon /></SegBtn>
              <SegBtn $w={11}><Caret /></SegBtn>
            </Seg>
          </Line>
        </Stack>
      </Group>

      <Group $w={168} $pl={9}>
        <Stack>
          <Line>
            <Seg>
              <SegBtn $w={28}><LinesIcon rows={[[1, 15, 0], [4, 12, 3]]} /></SegBtn>
              <SegBtn $w={28}><LinesIcon rows={[[2, 14, 4], [2, 14, 7]]} /></SegBtn>
              <SegBtn $w={29} $active><LinesIcon rows={[[2, 14, 8], [2, 14, 11]]} /></SegBtn>
            </Seg>
            <Seg>
              <SegBtn $w={22}><OrientIcon /></SegBtn>
              <SegBtn $w={12}><Caret /></SegBtn>
            </Seg>
          </Line>
          <Line>
            <Seg>
              <SegBtn $w={28}><LinesIcon rows={[[1, 15, 1], [1, 10, 4], [1, 15, 7], [1, 10, 10]]} /></SegBtn>
              <SegBtn $w={28}><LinesIcon rows={[[1, 15, 1], [3, 13, 4], [1, 15, 7], [3, 13, 10]]} /></SegBtn>
              <SegBtn $w={29}><LinesIcon rows={[[1, 15, 1], [6, 15, 4], [1, 15, 7], [6, 15, 10]]} /></SegBtn>
            </Seg>
            <Seg>
              <SegBtn $w={28}><IndentIcon /></SegBtn>
              <SegBtn $w={28}><IndentIcon flip /></SegBtn>
            </Seg>
          </Line>
        </Stack>
      </Group>

      <Group $w={140} $pl={14}>
        <Stack>
          <PlainLink>
            <WrapIcon />
            <LinkLabel $left={4}>Wrap Text</LinkLabel>
          </PlainLink>
          <PlainLink $muted>
            <MergeIcon />
            <LinkLabel $left={7}>Merge &amp; Center</LinkLabel>
            <Caret $ml={8} $color="#b5b5b5" />
          </PlainLink>
        </Stack>
      </Group>

      <Group $w={177} $pl={9}>
        <Stack>
          <Line>
            <Select $w={158}>General<SelectArrow><Caret /></SelectArrow></Select>
          </Line>
          <Line>
            <Seg>
              <SegBtn $w={24}><CoinsIcon /></SegBtn>
              <SegBtn $w={11}><Caret /></SegBtn>
              <SegBtn $w={29}>%</SegBtn>
              <SegBtn $w={29}><CommaIcon /></SegBtn>
            </Seg>
            <Seg>
              <SegBtn $w={28}><DecimalIcon more /></SegBtn>
              <SegBtn $w={28}><DecimalIcon /></SegBtn>
            </Seg>
          </Line>
        </Stack>
      </Group>

      <Group $w={178} $pl={8} $pt={7}>
        <StyleBtn $w={58}>
          <StyleIcon><CondIcon /><Caret /></StyleIcon>
          Conditional Formatting
        </StyleBtn>
        <StyleBtn $w={56}>
          <StyleIcon $pl={4}><BrushGrid /><Caret /></StyleIcon>
          Format as&nbsp;Table
        </StyleBtn>
        <StyleBtn $w={48}>
          <StyleIcon $pl={2}><BrushGrid tinted /><Caret /></StyleIcon>
          Cell Styles
        </StyleBtn>
      </Group>

      <Group $w={92} $pl={12} $pt={0}>
        <Stack $gap={0}>
          <CellLine>
            <GridMini>
              <path d="M6 5h10v4H6z" fill="#5cb85c" />
              <path d="M0 7l4-3.500v7z" fill="#3aa35a" />
            </GridMini>
            Insert
            <Caret $ml={3} />
          </CellLine>
          <CellLine>
            <GridMini>
              <path d="M1 5h16v4H1z" fill="#e04848" />
              <path d="M17 4.500l3 3.500m0-3.500L17 8" stroke="#d13a3a" strokeWidth="1.2" />
            </GridMini>
            Delete
            <Caret $ml={3} />
          </CellLine>
          <CellLine>
            <FormatCellIcon />
            Format
            <Caret />
          </CellLine>
        </Stack>
      </Group>

      <LastGroup $w={177} $pl={16} $pt={0}>
        <Stack $gap={0}>
          <EditLine><SigmaIcon /><Caret /></EditLine>
          <EditLine><FillDownIcon /><Caret /></EditLine>
          <EditLine><EraserIcon /><Caret /></EditLine>
        </Stack>
        <SortBtn $w={38}>
          <StyleIcon><SortIcon /><SortCaret /></StyleIcon>
          Sort &amp; Filter
        </SortBtn>
      </LastGroup>
    </Ribbon>

    <FormulaBar>
      <NameBox>
        J265
        <Steppers>
          <Caret $up $color="#666" />
          <Caret $color="#666" />
        </Steppers>
      </NameBox>
      <FormulaTools>
        <CrossIcon />
        <CheckIcon />
        <Fx>fx</Fx>
      </FormulaTools>
      <FormulaInput>
        <Caret $color="#666" />
      </FormulaInput>
    </FormulaBar>

    <Sheet>
      <OutlineBand>
        <BandGutter />
        <LevelStack>
          <LevelKey>1</LevelKey>
          <LevelKey>2</LevelKey>
        </LevelStack>
        <BracketBar />
        {[7, 8, 9, 10, 11, 12, 14].map((c) => (
          <BandDot key={c} $col={c} />
        ))}
        <BandFreeze />
        <BandMinus />
      </OutlineBand>

      <HeaderRow>
        <HeaderGutter>
          <HeaderLevel>1</HeaderLevel>
          <HeaderLevel>2</HeaderLevel>
        </HeaderGutter>
        <Corner>
          <svg width="14" height="14" viewBox="0 0 14 14">
            <path d="M14 0v14H0z" fill="#dcdcdc" />
          </svg>
        </Corner>
        {HEADER_LETTERS.map((h) => (
          <ColHead key={h.key} $selected={h.selected} $freeze={h.key === "X"}>
            {h.label}
          </ColHead>
        ))}
      </HeaderRow>

      {TOP_ROWS.map((row) => (
        <DataRow key={row.n} row={row} />
      ))}

      <SheetRow $h={2}>
        <Gutter />
        <RowHead />
        {COLUMNS.map((c) => (
          <SpacerCell key={c} $freeze={c === "X"} />
        ))}
      </SheetRow>

      <SheetRow $h={13} $fill="#fdbd3f">
        <Gutter />
        <BannerHead>300</BannerHead>
        <BannerText>Reserve Accounts</BannerText>
        <BannerFreeze />
      </SheetRow>

      {BODY_ROWS.map((row) => (
        <DataRow key={row.n} row={row} />
      ))}
    </Sheet>

    <TabStrip>
      <TabNav>
        <NavArrow />
        <NavArrow right />
      </TabNav>
      {SHEET_TABS.map((tab) => (
        <SheetTab key={tab.name} $w={tab.width} $bar={tab.bar} $active={tab.active}>
          {tab.fade === "left" && <FadedName>{tab.name}</FadedName>}
          {tab.fade === "right" && <ClippedName>{tab.name}</ClippedName>}
          {!tab.fade && tab.name}
        </SheetTab>
      ))}
      <AddSheet>+</AddSheet>
    </TabStrip>

    <StatusBar>
      Ready
      <StatusRight>
        <ViewBtn $active><NormalViewIcon /></ViewBtn>
        <ViewBtn><PageViewIcon /></ViewBtn>
        <Zoomer>
          −
          <SliderTrack><SliderThumb /></SliderTrack>
          +
        </Zoomer>
        <ZoomValue>100%</ZoomValue>
      </StatusRight>
    </StatusBar>
  </Page>
);

export default App;
